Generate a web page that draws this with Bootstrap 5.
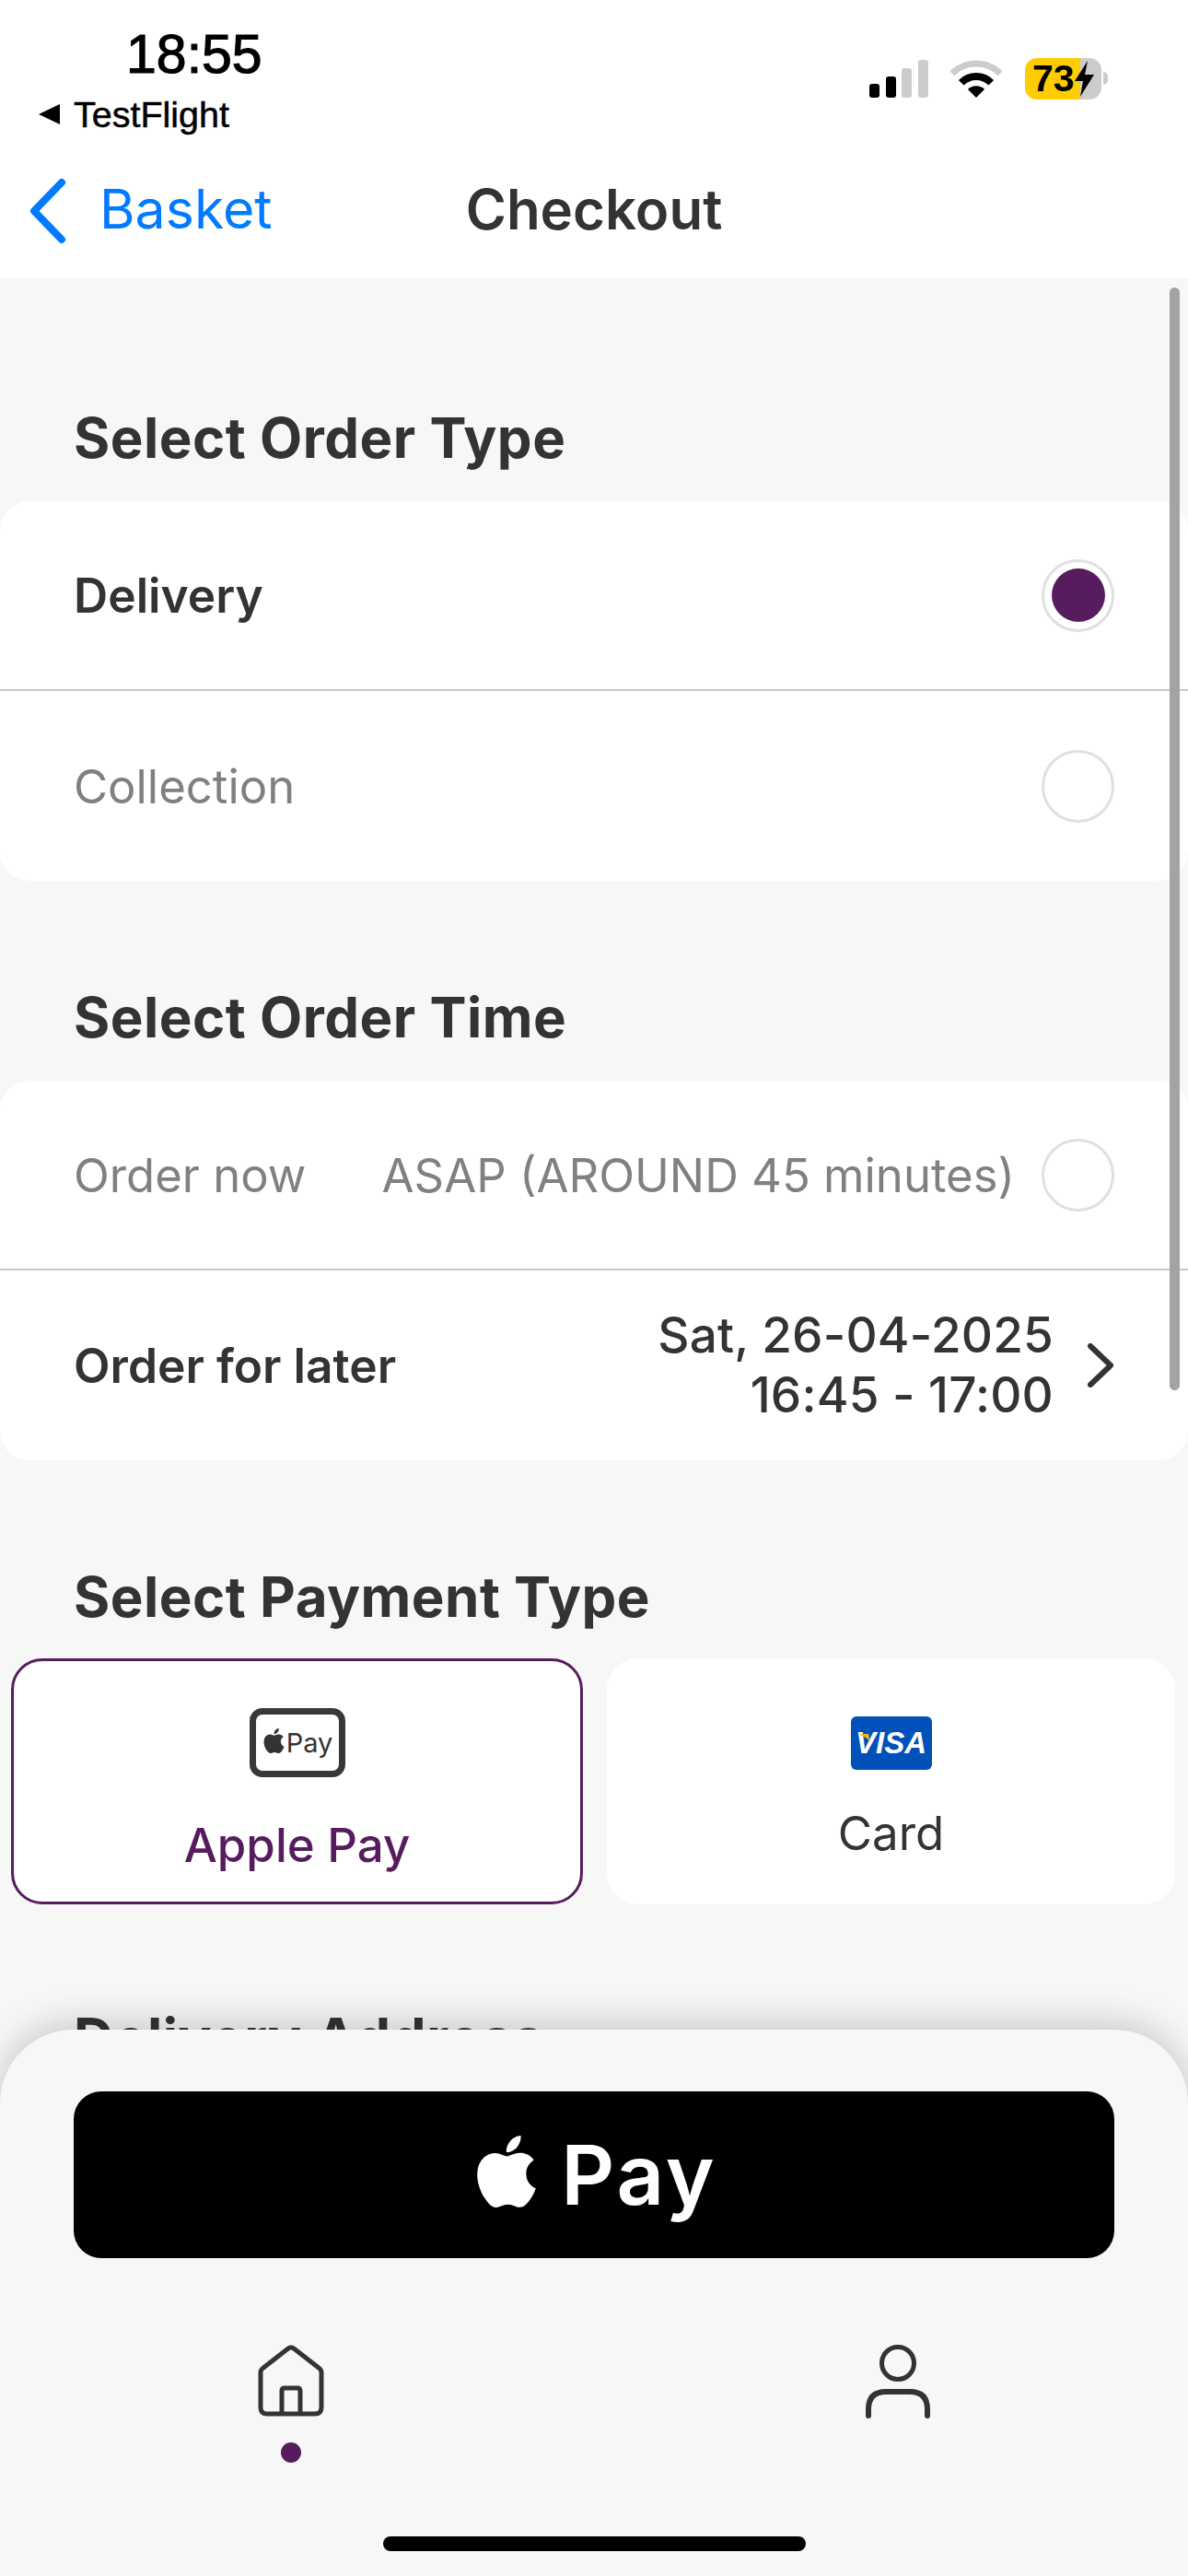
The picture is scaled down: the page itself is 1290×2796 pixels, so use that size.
<!DOCTYPE html>
<html lang="en">
<head>
  <meta charset="UTF-8">
  <title>Checkout</title>
  <link href="https://cdn.jsdelivr.net/npm/bootstrap@5.3.3/dist/css/bootstrap.min.css" rel="stylesheet">
  <style>
    html, body { margin: 0; height: 2796px; overflow: hidden; }
    body { background: #f7f7f7; color: #333; font-family: Inter, "Liberation Sans", sans-serif; }
    .phone { position: relative; height: 2796px; overflow: hidden; }

    .top-area { background: #fff; height: 302px; }
    .status-row { height: 165px; }
    .status-left { padding-left: 137px; padding-top: 27px; }
    .clock { font: 400 59px/64px "Liberation Sans", sans-serif; color: #000; -webkit-text-stroke: 1.2px #000; }
    .back-app { margin-left: -95px; padding-top: 10px; color: #000; font: 400 39.5px/46px "Liberation Sans", sans-serif; -webkit-text-stroke: .5px #000; }
    .back-tri { width: 0; height: 0; border-top: 11px solid transparent; border-bottom: 11px solid transparent; border-right: 23px solid #000; margin-right: 15px; }
    .status-right { padding-right: 87px; padding-top: 63px; height: 108px; }
    .signal-bars { width: 64px; height: 41px; margin-top: 2px; }
    .wifi-mark { width: 56px; height: 41px; margin-left: 24px; margin-top: 2px; }
    .batt-body { width: 83px; height: 45px; border-radius: 13px; margin-left: 25px; background: linear-gradient(90deg, #fc0 72%, #ccc 72%); color: #000; font: 700 41px/45px "Liberation Sans", sans-serif; padding-left: 8px; }
    .batt-body svg { width: 23px; height: 39px; margin-left: -1px; margin-top: 3px; }
    .batt-cap { width: 5px; height: 14px; background: #ccc; border-radius: 0 5px 5px 0; margin-left: 2px; margin-top: 15px; }

    .nav-row { height: 137px; padding-bottom: 7px; }
    .nav-side { flex: 1; }
    .back-link { color: #007aff; font-size: 59px; line-height: 70px; text-decoration: none; padding-left: 31px; }
    .back-link svg { width: 43px; height: 72px; margin-right: 34px; position: relative; top: 2px; }
    .nav-title { font-size: 60px; font-weight: 600; line-height: 70px; margin: 0 0 6px; color: #333; }

    .sect-title { font-size: 60px; font-weight: 700; line-height: 76px; letter-spacing: .5px; margin: 0 0 32px; padding: 1px 0 0 80px; height: 76px; color: #333; }
    .sect-cut { margin-top: 106px; }
    .first-block { padding-top: 134px; }
    .opt-list { --bs-list-group-bg: #fff; --bs-list-group-border-width: 0; border-radius: 32px; margin-bottom: 109px; }
    .opt-item { height: 206px; padding: 0 80px 0 80px; border-bottom: 2px solid #c9c9c9 !important; font-size: 50.8px; color: #808080; }
    .opt-item:last-child { border-bottom: 0 !important; }
    .opt-item.is-on { color: #333; font-weight: 600; font-size: 51.5px; }
    .opt-label { position: relative; top: 1px; }
    .radio-ring { width: 79px; height: 79px; border: 3px solid #e0e0e0; border-radius: 50%; background: #fff; }
    .radio-dot { width: 58px; height: 58px; border-radius: 50%; background: #561c5e; }
    .time-note { margin-right: 29px; }
    .time-value { text-align: right; line-height: 65px; margin-right: 36px; font-size: 53px; letter-spacing: .2px; font-weight: 500; color: #333; }
    .row-chevron { width: 30px; height: 48px; }

    .pay-row { padding: 0 14px 0 12px; gap: 26px; margin-top: -2px; }
    .pay-tile { height: 267px; border-radius: 34px; background: #fff; border: 3px solid #fff; font-size: 51px; line-height: 60px; }
    .pay-tile.is-on { border-color: #561c5e; color: #561c5e; font-weight: 500; }
    .tile-apple { flex: 0 0 621px; padding-top: 51px; }
    .tile-visa { flex: 1; padding-top: 60px; color: #333; }
    .apple-badge { width: 104px; height: 75px; border: 7px solid #383838; border-radius: 14px; background: #fff; color: #333; margin-bottom: 44px; font-size: 29px; line-height: 1; font-weight: 400; }
    .apple-badge svg { width: 27px; height: 27px; margin-bottom: 4px; }
    .visa-badge { position: relative; width: 88px; height: 58px; background: #0051ba; border-radius: 6px; color: #fff; font: italic 700 33px/58px "Liberation Sans", sans-serif; text-align: center; margin-bottom: 39px; }
    .visa-flag { position: absolute; left: 7px; top: 19px; width: 14px; height: 9px; }

    .scroll-thumb { position: absolute; left: 1270px; top: 312px; width: 11px; height: 1197px; background: #a3a3a3; border-radius: 6px; }

    .bottom-panel { position: absolute; left: 0; right: 0; top: 2203px; bottom: 0; background: #f7f7f7; border-radius: 80px 80px 0 0; box-shadow: 0 -6px 40px rgba(0, 0, 0, .2); padding-top: 67px; }
    .pay-now { display: flex; align-items: center; justify-content: center; width: 1130px; height: 181px; margin: 0 0 0 80px; background: #000; border: 0; border-radius: 30px; color: #fff; font-size: 90px; font-weight: 600; letter-spacing: 3px; line-height: 1; }
    .pay-now svg { width: 78px; height: 78px; margin-right: 20px; margin-top: -8px; }
    .tab-row { padding: 94px 280px 0 280px; }
    .tab-home svg { width: 72px; height: 78px; display: block; }
    .tab-person svg { width: 70px; height: 80px; display: block; }
    .tab-dot { width: 22px; height: 22px; border-radius: 50%; background: #561c5e; margin: 28px auto 0; }
    .home-bar { position: absolute; left: 416px; top: 550px; width: 459px; height: 16px; border-radius: 8px; background: #000; }
  </style>
</head>
<body>
<div class="phone">

  <header class="top-area">
    <div class="status-row d-flex justify-content-between">
      <div class="status-left">
        <div class="clock">18:55</div>
        <div class="back-app d-flex align-items-center"><span class="back-tri"></span>TestFlight</div>
      </div>
      <div class="status-right d-flex align-items-start">
        <svg class="signal-bars" viewBox="0 0 64 41">
          <rect x="0" y="26" width="11" height="15" rx="3" fill="#000"/>
          <rect x="18" y="18" width="11" height="23" rx="3" fill="#000"/>
          <rect x="35" y="9" width="11" height="32" rx="3" fill="#ccc"/>
          <rect x="53" y="0" width="11" height="41" rx="3" fill="#ccc"/>
        </svg>
        <svg class="wifi-mark" viewBox="0 0 56 41">
          <path d="M1.8 14.8A37 37 0 0 1 54.2 14.8" fill="none" stroke="#ccc" stroke-width="7"/>
          <path d="M11.7 24.7A23 23 0 0 1 44.3 24.7" fill="none" stroke="#000" stroke-width="8"/>
          <path d="M28 41L19 32A12.7 12.7 0 0 1 37 32Z" fill="#000"/>
        </svg>
        <div class="batt-body d-flex align-items-start">73<svg viewBox="0 0 23 39"><path d="M15 0L1 22H10L7 39L22 15H12Z" fill="#000"/></svg></div>
        <span class="batt-cap"></span>
      </div>
    </div>
    <nav class="nav-row d-flex align-items-center">
      <div class="nav-side">
        <a class="back-link d-inline-flex align-items-center" href="#">
          <svg viewBox="0 0 43 72"><path d="M36 5L6 36L36 67" fill="none" stroke="#007aff" stroke-width="8" stroke-linecap="round" stroke-linejoin="round"/></svg>Basket</a>
      </div>
      <h1 class="nav-title">Checkout</h1>
      <div class="nav-side"></div>
    </nav>
  </header>

  <main class="first-block">
    <h2 class="sect-title">Select Order Type</h2>
    <div class="list-group opt-list">
      <div class="list-group-item opt-item is-on d-flex align-items-center justify-content-between">
        <span class="opt-label">Delivery</span>
        <span class="radio-ring d-flex align-items-center justify-content-center"><span class="radio-dot"></span></span>
      </div>
      <div class="list-group-item opt-item d-flex align-items-center justify-content-between">
        <span class="opt-label">Collection</span>
        <span class="radio-ring"></span>
      </div>
    </div>

    <h2 class="sect-title">Select Order Time</h2>
    <div class="list-group opt-list">
      <div class="list-group-item opt-item d-flex align-items-center">
        <span class="opt-label me-auto">Order now</span>
        <span class="opt-label time-note">ASAP (AROUND 45 minutes)</span>
        <span class="radio-ring"></span>
      </div>
      <div class="list-group-item opt-item is-on d-flex align-items-center">
        <span class="opt-label me-auto">Order for later</span>
        <span class="time-value">Sat, 26-04-2025<br>16:45 - 17:00</span>
        <svg class="row-chevron" viewBox="0 0 30 48"><path d="M4 3L26 24L4 45" fill="none" stroke="#333" stroke-width="6" stroke-linecap="round" stroke-linejoin="round"/></svg>
      </div>
    </div>

    <h2 class="sect-title">Select Payment Type</h2>
    <div class="pay-row d-flex">
      <div class="pay-tile tile-apple is-on d-flex flex-column align-items-center">
        <div class="apple-badge d-flex align-items-center justify-content-center">
          <svg viewBox="0 0 24 24"><path fill="#333" d="M12.152 6.896c-.948 0-2.415-1.078-3.96-1.04-2.04.027-3.91 1.183-4.961 3.014-2.117 3.675-.546 9.103 1.519 12.09 1.013 1.454 2.208 3.09 3.792 3.039 1.52-.065 2.09-.987 3.935-.987 1.831 0 2.35.987 3.96.948 1.637-.026 2.676-1.48 3.676-2.948 1.156-1.688 1.636-3.325 1.662-3.415-.039-.013-3.182-1.221-3.22-4.857-.026-3.04 2.48-4.494 2.597-4.559-1.429-2.09-3.623-2.324-4.39-2.376-2-.156-3.675 1.09-4.61 1.09zM15.53 3.83c.843-1.012 1.4-2.427 1.245-3.83-1.207.052-2.662.805-3.532 1.818-.78.896-1.454 2.338-1.273 3.714 1.338.104 2.715-.688 3.559-1.701"/></svg>
          <span>Pay</span>
        </div>
        <span>Apple Pay</span>
      </div>
      <div class="pay-tile tile-visa d-flex flex-column align-items-center">
        <div class="visa-badge">VISA<svg class="visa-flag" viewBox="0 0 14 9"><path d="M0 0H12L14 9C11 4 6 2 0 0Z" fill="#f7b600"/></svg></div>
        <span>Card</span>
      </div>
    </div>

    <h2 class="sect-title sect-cut">Delivery Address</h2>
  </main>

  <div class="scroll-thumb"></div>

  <footer class="bottom-panel">
    <button class="btn pay-now" type="button">
      <svg viewBox="0 0 24 24"><path fill="#fff" d="M12.152 6.896c-.948 0-2.415-1.078-3.96-1.04-2.04.027-3.91 1.183-4.961 3.014-2.117 3.675-.546 9.103 1.519 12.09 1.013 1.454 2.208 3.09 3.792 3.039 1.52-.065 2.09-.987 3.935-.987 1.831 0 2.35.987 3.96.948 1.637-.026 2.676-1.48 3.676-2.948 1.156-1.688 1.636-3.325 1.662-3.415-.039-.013-3.182-1.221-3.22-4.857-.026-3.04 2.48-4.494 2.597-4.559-1.429-2.09-3.623-2.324-4.39-2.376-2-.156-3.675 1.09-4.61 1.09zM15.53 3.83c.843-1.012 1.4-2.427 1.245-3.83-1.207.052-2.662.805-3.532 1.818-.78.896-1.454 2.338-1.273 3.714 1.338.104 2.715-.688 3.559-1.701"/></svg>
      <span>Pay</span>
    </button>
    <div class="tab-row d-flex justify-content-between align-items-start">
      <div class="tab-home">
        <svg viewBox="0 0 72 78"><path d="M3 30Q3 27 6 25L33 4Q36 2 39 4L66 25Q69 27 69 30V68Q69 75 62 75H10Q3 75 3 68Z" fill="none" stroke="#333" stroke-width="5" stroke-linejoin="round"/><path d="M26 75V50Q26 47 29 47H43Q46 47 46 50V75" fill="none" stroke="#333" stroke-width="5"/></svg>
        <div class="tab-dot"></div>
      </div>
      <div class="tab-person">
        <svg viewBox="0 0 70 80"><circle cx="35" cy="20" r="17.5" fill="none" stroke="#333" stroke-width="5"/><path d="M3 77V70Q3 51 22 51H48Q67 51 67 70V77" fill="none" stroke="#333" stroke-width="6" stroke-linecap="round"/></svg>
      </div>
    </div>
    <div class="home-bar"></div>
  </footer>

</div>
<script src="https://cdn.jsdelivr.net/npm/bootstrap@5.3.3/dist/js/bootstrap.bundle.min.js"></script>
</body>
</html>
